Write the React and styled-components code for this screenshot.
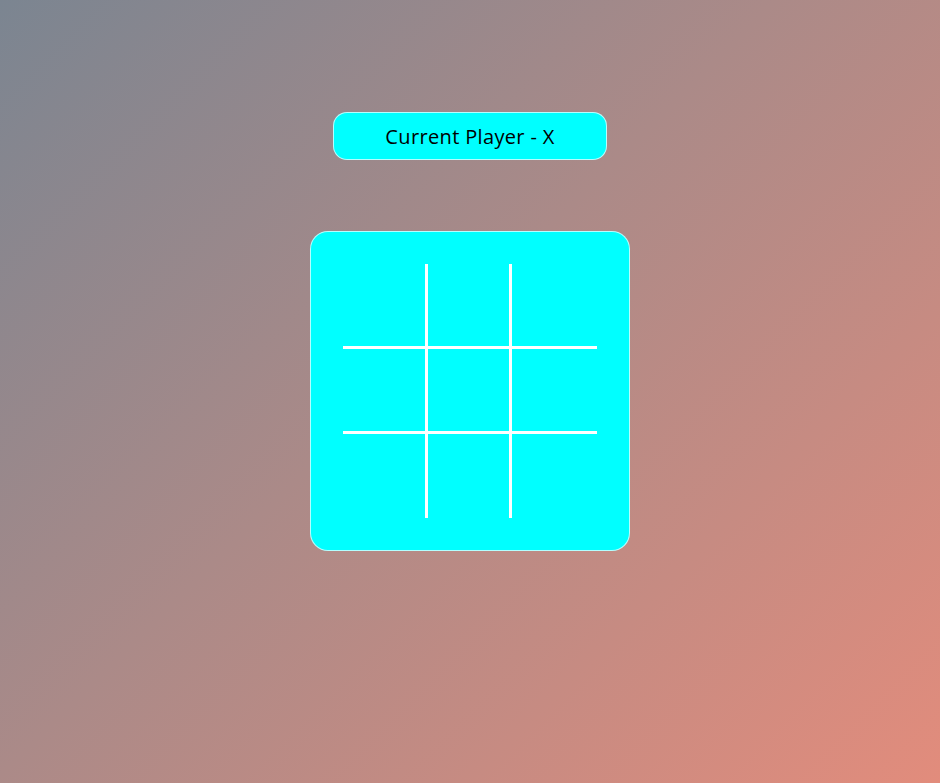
import React from "react";
import styled, { createGlobalStyle } from "styled-components";

const Global = createGlobalStyle`
  html, body { margin: 0; padding: 0; }
  body {
    min-height: 100vh;
    background: linear-gradient(135deg, #7b8591 0%, #ab8a88 45%, #e28c7c 100%);
    background-attachment: fixed;
    font-family: "Open Sans", "Liberation Sans", sans-serif;
  }
`;

const Page = styled.main`
  min-height: 100vh;
  box-sizing: border-box;
  padding-top: 112px;
  display: flex;
  flex-direction: column;
  align-items: center;
  gap: 71px;
`;

const Status = styled.div`
  width: 274px;
  height: 48px;
  box-sizing: border-box;
  display: flex;
  align-items: center;
  justify-content: center;
  background: #00ffff;
  border: 1px solid rgba(255, 255, 255, 0.7);
  border-radius: 14px;
  color: #000;
  font-size: 20px;
  letter-spacing: 0.35px;
  padding-top: 1px;
`;

const Board = styled.div`
  width: 320px;
  height: 320px;
  box-sizing: border-box;
  padding: 32px;
  background: #00ffff;
  border: 1px solid rgba(255, 255, 255, 0.7);
  border-radius: 18px;
`;

const Grid = styled.div`
  width: 254px;
  height: 254px;
  display: grid;
  grid-template-columns: 82px 81px 85px;
  grid-template-rows: 82px 82px 84px;
  gap: 3px;
  background: #ffffff;
`;

const Cell = styled.button`
  border: none;
  padding: 0;
  margin: 0;
  background: #00ffff;
  cursor: pointer;
  font-family: inherit;
  font-size: 48px;
  color: #000;
`;

export default function App() {
  const cells = Array.from({ length: 9 });
  return (
    <>
      <Global />
      <Page>
        <Status>Current Player - X</Status>
        <Board>
          <Grid>
            {cells.map((_, i) => (
              <Cell key={i} aria-label={`cell ${i + 1}`} />
            ))}
          </Grid>
        </Board>
      </Page>
    </>
  );
}
